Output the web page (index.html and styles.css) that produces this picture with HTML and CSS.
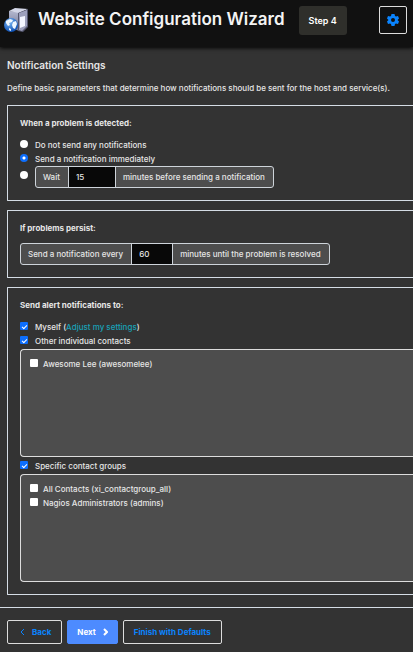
FILE: index.html
```html
<!DOCTYPE html>
<html lang="en">
<head>
    <meta charset="UTF-8">
    <meta name="viewport" content="width=device-width, initial-scale=1.0">
    <title>Website Configuration Wizard</title>
    <link rel="stylesheet" href="styles.css">
</head>
<body>
    <header class="header">
        <svg class="logo" viewBox="0 0 24 24" aria-hidden="true">
            <defs>
                <linearGradient id="side" x1="0" y1="0" x2="0" y2="1">
                    <stop offset="0" stop-color="#b4b8d0"/>
                    <stop offset="1" stop-color="#6c6f8c"/>
                </linearGradient>
                <radialGradient id="globe" cx="0.4" cy="0.3" r="0.7">
                    <stop offset="0" stop-color="#7cb8f4"/>
                    <stop offset="1" stop-color="#0c4fb4"/>
                </radialGradient>
            </defs>
            <path fill="url(#side)" d="M5 3l10 1v19L5 19z"/>
            <path fill="#d4d7e8" d="M5 3l6-3 13 1-9 4z"/>
            <path fill="#55576f" d="M14 5l10-4v18l-5 5-5-1z"/>
            <path fill="#9da0bc" d="M15 5l8-3v16l-5 5-3-1z"/>
            <path fill="#f4f6ff" d="M16 9l5-1v10l-5 2z"/>
            <circle cx="7" cy="17" r="7" fill="url(#globe)"/>
            <path fill="#eef7ff" d="M2 13l4-2 3 1-1 2-3 1 1 2-2 1-2-3zM9 14l3-1 1 3-2 5-2-1-1-3zM5 20l2 1v2l-2-1z"/>
        </svg>
        <h1>Website Configuration Wizard</h1>
        <span class="step">Step 4</span>
        <button type="button" class="gear" aria-label="Settings">
            <svg viewBox="0 0 24 24" aria-hidden="true">
                <path fill="#0a84ff" fill-rule="evenodd" d="M9 0h6l1 4 2 1 4-1 2 5-3 3 3 3-2 5-4-1-2 1-1 4H9l-1-4-2-1-4 1-2-5 3-3-3-3 2-5 4 1 2-1zM12 8a4 4 0 1 0 0 8 4 4 0 0 0 0-8z"/>
            </svg>
        </button>
    </header>

    <form>
        <main>
            <h2>Notification Settings</h2>
            <p>Define basic parameters that determine how notifications should be sent for the host and service(s).</p>

            <section class="panel">
                <h3>When a problem is detected:</h3>
                <div class="row">
                    <input type="radio" name="detected" id="none">
                    <label for="none">Do not send any notifications</label>
                </div>
                <div class="row">
                    <input type="radio" name="detected" id="now" checked>
                    <label for="now">Send a notification immediately</label>
                </div>
                <div class="row">
                    <input type="radio" name="detected" id="wait" class="tall" aria-label="Wait before sending">
                    <div class="group">
                        <label for="delay">Wait</label>
                        <input type="text" id="delay" class="delay" value="15">
                        <span>minutes before sending a notification</span>
                    </div>
                </div>
            </section>

            <section class="panel">
                <h3>If problems persist:</h3>
                <div class="group">
                    <label for="interval">Send a notification every</label>
                    <input type="text" id="interval" value="60">
                    <span>minutes until the problem is resolved</span>
                </div>
            </section>

            <section class="panel">
                <h3>Send alert notifications to:</h3>
                <div class="row">
                    <input type="checkbox" id="myself" checked>
                    <span><label for="myself">Myself</label> (<a href="#">Adjust my settings</a>)</span>
                </div>
                <div class="row">
                    <input type="checkbox" id="contacts" checked>
                    <label for="contacts">Other individual contacts</label>
                </div>
                <div class="list">
                    <div class="item">
                        <input type="checkbox" id="lee">
                        <label for="lee">Awesome Lee (awesomelee)</label>
                    </div>
                </div>
                <div class="row list-title">
                    <input type="checkbox" id="groups" checked>
                    <label for="groups">Specific contact groups</label>
                </div>
                <div class="list">
                    <div class="item">
                        <input type="checkbox" id="all">
                        <label for="all">All Contacts (xi_contactgroup_all)</label>
                    </div>
                    <div class="item">
                        <input type="checkbox" id="admins">
                        <label for="admins">Nagios Administrators (admins)</label>
                    </div>
                </div>
            </section>
        </main>

        <footer class="actions">
            <button type="button" class="btn back">
                <svg viewBox="0 0 6 8" aria-hidden="true"><path d="M4 1L1 4l3 3"/></svg>
                Back
            </button>
            <button type="submit" class="btn primary">
                Next
                <svg viewBox="0 0 6 8" aria-hidden="true"><path d="M2 1l3 3-3 3"/></svg>
            </button>
            <button type="button" class="btn">Finish with Defaults</button>
        </footer>
    </form>
</body>
</html>
```
FILE: styles.css
```css
* {
    box-sizing: border-box;
}
body {
    margin: 0;
    background: #333;
    color: #e6e6e6;
    font-family: Inter, "Open Sans", sans-serif;
    font-size: 8px;
    font-weight: 500;
    line-height: 14px;
}
h1, h2, h3, p {
    margin: 0;
    white-space: nowrap;
}
input, button {
    margin: 0;
    font: inherit;
}

.header {
    display: flex;
    align-items: flex-start;
    height: 47px;
    padding: 6px 6px 0 4px;
    background: #111;
    box-shadow: 0 1px 4px #000;
}
.logo {
    flex: none;
    width: 24px;
    height: 24px;
    margin: 2px 10px 0 0;
}
h1 {
    color: #f4f4f4;
    font-size: 17px;
    font-weight: 600;
    line-height: 26px;
}
.step {
    margin-left: 14px;
    padding: 0 10px;
    border-radius: 3px;
    background: #2f2f2b;
    color: #fff;
    font-size: 9px;
    font-weight: 600;
    line-height: 29px;
    white-space: nowrap;
}
.gear {
    display: flex;
    align-items: center;
    justify-content: center;
    flex: none;
    width: 28px;
    height: 28px;
    margin-left: auto;
    padding: 0;
    border: 1px solid #ddd;
    border-radius: 2px;
    background: transparent;
}
.gear svg {
    width: 12px;
    height: 12px;
}

main {
    padding: 11px 0 12px 7px;
    overflow: hidden;
}
h2 {
    font-size: 10px;
    font-weight: 600;
}
p {
    margin: 9px 0 10px;
}
/* panels run off the right edge of the window */
.panel {
    margin-bottom: 9px;
    padding: 10px 0 12px 12px;
    border: 1px solid #d5dde5;
    border-right: 0;
    border-radius: 1px 0 0 1px;
}
.panel:last-child {
    margin-bottom: 0;
}
h3 {
    margin-bottom: 8px;
    font-size: 8px;
    font-weight: 700;
}
.row {
    display: flex;
    gap: 7px;
}
input[type="radio"],
input[type="checkbox"] {
    appearance: none;
    flex: none;
    width: 8px;
    height: 8px;
    margin-top: 2px;
    background: #fff;
}
input[type="radio"] {
    border-radius: 50%;
}
input[type="radio"].tall {
    margin-top: 5px;
}
input[type="radio"]:checked {
    background: radial-gradient(circle, #fff 0 1px, #0d6efd 2px);
}
input[type="checkbox"] {
    border-radius: 1px;
}
.row input[type="checkbox"]:checked {
    display: grid;
    place-items: center;
    background: #0d6efd;
}
.row input[type="checkbox"]:checked::before {
    content: "";
    width: 4px;
    height: 2px;
    border-left: 1px solid #fff;
    border-bottom: 1px solid #fff;
    transform: rotate(-45deg);
}
a {
    color: #17a2b8;
    text-decoration: none;
}

.group {
    display: flex;
    width: max-content;
    border: 1px solid #ced4da;
    border-radius: 3px;
    background: #4d4d4d;
    line-height: 20px;
    overflow: hidden;
}
.group label,
.group span {
    padding: 0 8px 0 7px;
}
.group input {
    width: 42px;
    padding: 0 7px;
    border: 1px solid #ced4da;
    border-width: 0 1px;
    background: #080808;
    color: #e6e6e6;
}
.group .delay {
    width: 48px;
}

.list {
    height: 108px;
    margin-top: 1px;
    padding: 7px 9px;
    border: 1px solid #ddd;
    border-right: 0;
    border-radius: 4px 0 0 4px;
    background: #4d4d4d;
    overflow: hidden;
}
.list-title {
    margin-top: 2px;
}
.item {
    display: flex;
    gap: 5px;
}

.actions {
    display: flex;
    gap: 5px;
    padding: 12px 7px 8px;
    border-top: 1px solid #d5dde5;
}
.btn {
    display: flex;
    align-items: center;
    gap: 6px;
    padding: 4px 10px;
    border: 1px solid #ddd;
    border-radius: 2px;
    background: transparent;
    color: #0a84ff;
    font-weight: 700;
}
.btn svg {
    width: 6px;
    height: 8px;
    fill: none;
    stroke: currentColor;
    stroke-width: 2;
}
.back {
    padding-left: 12px;
}
.back svg {
    stroke-width: 1;
}
.primary {
    padding: 4px 9px;
    border-color: #4d8bff;
    background: #4d8bff;
    color: #fff;
}
```
